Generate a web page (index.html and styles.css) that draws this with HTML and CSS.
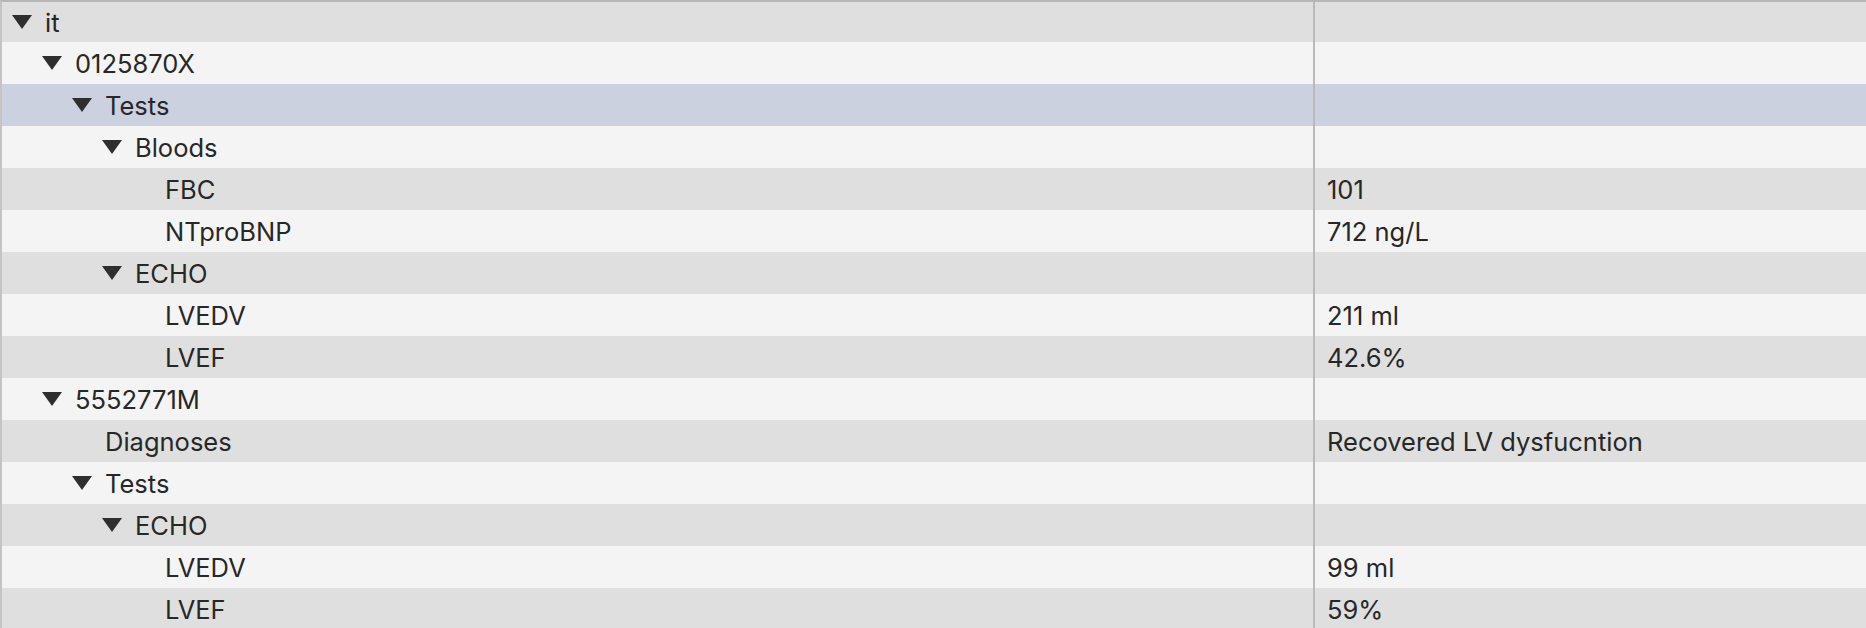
FILE: index.html
```html
<!DOCTYPE html>
<html>
<head>
<meta charset="utf-8">
<link rel="stylesheet" href="styles.css">
</head>
<body>
<div class="outline">
  <div class="row dark"><div class="name l0"><span class="tri"></span>it</div><div class="value"></div></div>
  <div class="row light"><div class="name l1"><span class="tri"></span>0125870X</div><div class="value"></div></div>
  <div class="row selected"><div class="name l2"><span class="tri"></span>Tests</div><div class="value"></div></div>
  <div class="row light"><div class="name l3"><span class="tri"></span>Bloods</div><div class="value"></div></div>
  <div class="row dark"><div class="name l4 leaf">FBC</div><div class="value">101</div></div>
  <div class="row light"><div class="name l4 leaf">NTproBNP</div><div class="value">712 ng/L</div></div>
  <div class="row dark"><div class="name l3"><span class="tri"></span>ECHO</div><div class="value"></div></div>
  <div class="row light"><div class="name l4 leaf">LVEDV</div><div class="value">211 ml</div></div>
  <div class="row dark"><div class="name l4 leaf">LVEF</div><div class="value">42.6%</div></div>
  <div class="row light"><div class="name l1"><span class="tri"></span>5552771M</div><div class="value"></div></div>
  <div class="row dark"><div class="name l2 leaf">Diagnoses</div><div class="value">Recovered LV dysfucntion</div></div>
  <div class="row light"><div class="name l2"><span class="tri"></span>Tests</div><div class="value"></div></div>
  <div class="row dark"><div class="name l3"><span class="tri"></span>ECHO</div><div class="value"></div></div>
  <div class="row light"><div class="name l4 leaf">LVEDV</div><div class="value">99 ml</div></div>
  <div class="row dark"><div class="name l4 leaf">LVEF</div><div class="value">59%</div></div>
</div>
</body>
</html>
```

FILE: styles.css
```css
html, body {
  margin: 0;
  padding: 0;
  background: #f4f4f4;
  overflow: hidden;
}
.outline {
  width: 1866px;
  height: 628px;
  box-sizing: border-box;
  border-top: 2px solid #b6b6b6;
  border-left: 2px solid #c4c4c4;
  font-family: "Inter", "Liberation Sans", sans-serif;
  font-size: 25.5px;
  color: #272727;
  overflow: hidden;
}
.row {
  display: flex;
  height: 42px;
}
.row:first-child {
  height: 40px;
}
.dark { background: #dfdfdf; }
.light { background: #f4f4f4; }
.selected { background: #cbd1de; }
.name {
  width: 1311px;
  flex: none;
  display: flex;
  align-items: center;
  gap: 13px;
  box-sizing: border-box;
  white-space: nowrap;
}
.value {
  flex: 1;
  display: flex;
  align-items: center;
  border-left: 2px solid #bababa;
  padding-left: 12px;
  white-space: nowrap;
}
.tri {
  width: 0;
  height: 0;
  border-left: 10px solid transparent;
  border-right: 10px solid transparent;
  border-top: 14px solid #2e2e2e;
  flex: none;
}
.l0 { padding-left: 10px; }
.l1 { padding-left: 40px; }
.l2 { padding-left: 70px; }
.l3 { padding-left: 100px; }
.l4 { padding-left: 130px; }
.leaf.l2 { padding-left: 103px; }
.leaf.l4 { padding-left: 163px; }
```
